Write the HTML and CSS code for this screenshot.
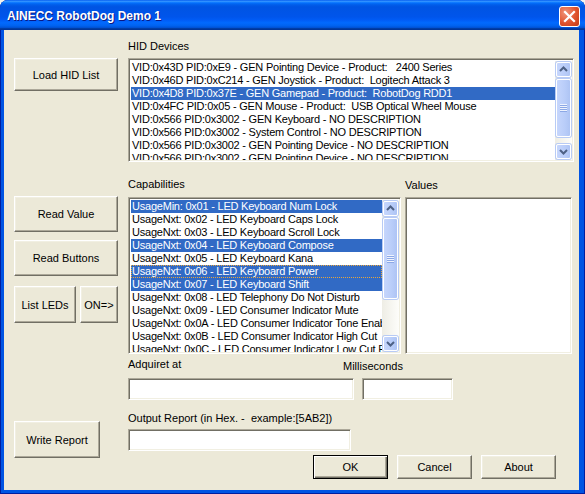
FILE: index.html
```html
<!DOCTYPE html>
<html lang="en">
<head>
    <meta charset="UTF-8">
    <title>AINECC RobotDog Demo 1</title>
    <link rel="stylesheet" href="styles.css">
</head>
<body>

<div class="window">
    <div class="titlebar">
        <span class="title">AINECC RobotDog Demo 1</span>
        <span class="close">
            <svg width="13" height="13" viewBox="0 0 13 13"><path d="M2 2 L11 11 M11 2 L2 11" stroke="#fff" stroke-width="2.2" stroke-linecap="square"/></svg>
        </span>
    </div>

    <div class="client">

        <!-- HID devices -->
        <div class="row hid-row">
            <div class="side">
                <button class="btn load-btn">Load HID List</button>
            </div>
            <div class="main">
                <div class="label">HID Devices</div>
                <div class="listbox hid-list">
                    <div class="items">
                        <div class="item">VID:0x43D PID:0xE9 - GEN Pointing Device - Product:   2400 Series</div>
                        <div class="item">VID:0x46D PID:0xC214 - GEN Joystick - Product:  Logitech Attack 3</div>
                        <div class="item selected">VID:0x4D8 PID:0x37E - GEN Gamepad - Product:  RobotDog RDD1</div>
                        <div class="item">VID:0x4FC PID:0x05 - GEN Mouse - Product:  USB Optical Wheel Mouse</div>
                        <div class="item">VID:0x566 PID:0x3002 - GEN Keyboard - NO DESCRIPTION</div>
                        <div class="item">VID:0x566 PID:0x3002 - System Control - NO DESCRIPTION</div>
                        <div class="item">VID:0x566 PID:0x3002 - GEN Pointing Device - NO DESCRIPTION</div>
                        <div class="item">VID:0x566 PID:0x3002 - GEN Pointing Device - NO DESCRIPTION</div>
                    </div>
                    <div class="sb">
                        <div class="sb-btn"><svg width="15" height="15" viewBox="0 0 15 15"><path d="M4 9 L7.5 5.5 L11 9" fill="none" stroke="#4d6185" stroke-width="2"/></svg></div>
                        <div class="sb-thumb hid-thumb"><span class="grip"></span></div>
                        <div class="sb-space"></div>
                        <div class="sb-btn"><svg width="15" height="15" viewBox="0 0 15 15"><path d="M4 6 L7.5 9.5 L11 6" fill="none" stroke="#4d6185" stroke-width="2"/></svg></div>
                    </div>
                </div>
            </div>
        </div>

        <!-- Capabilities / values -->
        <div class="row caps-row">
            <div class="side">
                <button class="btn tall-btn">Read Value</button>
                <button class="btn tall-btn read-buttons">Read Buttons</button>
                <div class="pair">
                    <button class="btn leds-btn">List LEDs</button>
                    <button class="btn on-btn">ON=&gt;</button>
                </div>
            </div>
            <div class="main caps-main">
                <div class="caps-col">
                    <div class="label">Capabilities</div>
                    <div class="listbox caps-list">
                        <div class="items">
                            <div class="item selected">UsageMin: 0x01 - LED Keyboard Num Lock</div>
                            <div class="item">UsageNxt: 0x02 - LED Keyboard Caps Lock</div>
                            <div class="item">UsageNxt: 0x03 - LED Keyboard Scroll Lock</div>
                            <div class="item selected">UsageNxt: 0x04 - LED Keyboard Compose</div>
                            <div class="item">UsageNxt: 0x05 - LED Keyboard Kana</div>
                            <div class="item selected focused">UsageNxt: 0x06 - LED Keyboard Power</div>
                            <div class="item selected">UsageNxt: 0x07 - LED Keyboard Shift</div>
                            <div class="item">UsageNxt: 0x08 - LED Telephony Do Not Disturb</div>
                            <div class="item">UsageNxt: 0x09 - LED Consumer Indicator Mute</div>
                            <div class="item">UsageNxt: 0x0A - LED Consumer Indicator Tone Enable</div>
                            <div class="item">UsageNxt: 0x0B - LED Consumer Indicator High Cut</div>
                            <div class="item">UsageNxt: 0x0C - LED Consumer Indicator Low Cut Filter</div>
                        </div>
                        <div class="sb">
                            <div class="sb-btn"><svg width="15" height="15" viewBox="0 0 15 15"><path d="M4 9 L7.5 5.5 L11 9" fill="none" stroke="#4d6185" stroke-width="2"/></svg></div>
                            <div class="sb-thumb caps-thumb"><span class="grip"></span></div>
                            <div class="sb-space"></div>
                            <div class="sb-btn"><svg width="15" height="15" viewBox="0 0 15 15"><path d="M4 6 L7.5 9.5 L11 6" fill="none" stroke="#4d6185" stroke-width="2"/></svg></div>
                        </div>
                    </div>
                </div>
                <div class="values-col">
                    <div class="label values-label">Values</div>
                    <div class="field values-box"></div>
                </div>
            </div>
        </div>

        <!-- Acquired at / milliseconds -->
        <div class="row adq-row">
            <div class="side"></div>
            <div class="main adq-main">
                <div class="adq-col">
                    <div class="label">Adquiret at</div>
                    <div class="field adq-box"></div>
                </div>
                <div class="ms-col">
                    <div class="label ms-label">Milliseconds</div>
                    <div class="field ms-box"></div>
                </div>
            </div>
        </div>

        <!-- Output report -->
        <div class="row out-row">
            <div class="side">
                <button class="btn write-btn">Write Report</button>
            </div>
            <div class="main">
                <div class="label">Output Report (in Hex. -  example:[5AB2])</div>
                <div class="field out-box"></div>
                <div class="dialog-buttons">
                    <button class="btn dlg-btn default">OK</button>
                    <button class="btn dlg-btn">Cancel</button>
                    <button class="btn dlg-btn">About</button>
                </div>
            </div>
        </div>

    </div>
</div>

</body>
</html>
```

FILE: styles.css
```css
body {
    margin: 0;
    background-color: #f4f3ee;
    font-family: "Liberation Sans", Arial, sans-serif;
    font-size: 11px;
    color: #000;
}

.window {
    width: 585px;
    height: 494px;
    background-color: #0054e3;
    border-radius: 8px 8px 0 0;
    display: flex;
    flex-direction: column;
    overflow: hidden;
    box-shadow: inset 1px 0 #001ea0, inset -1px 0 #001ea0, inset 0 -1px #001ea0;
}

.titlebar {
    height: 30px;
    flex: none;
    display: flex;
    align-items: center;
    justify-content: space-between;
    padding: 0 5px 0 7px;
    background: linear-gradient(to bottom, #0058ee 0%, #3593ff 4%, #288eff 6%, #127dff 8%, #036ffc 10%, #0262ee 14%, #0057e5 20%, #0054e3 24%, #0055eb 56%, #005bf5 66%, #026afe 76%, #0062ef 86%, #0052d6 92%, #0040ab 94%, #003092 100%);
}

.title {
    color: #fff;
    font-weight: bold;
    font-size: 12px;
    text-shadow: 1px 1px #0a1883;
    margin-top: 1px;
}

.close {
    width: 19px;
    height: 19px;
    border: 1px solid #fff;
    border-radius: 3px;
    background: radial-gradient(circle at 30% 30%, #f0947a, #e0532d 55%, #c23a14);
    display: flex;
    align-items: center;
    justify-content: center;
    margin-top: 2px;
}

.client {
    flex: 1;
    margin: 0 6px 4px 4px;
    background-color: #ece9d8;
    padding: 10px 0 0 10px;
}

.row {
    display: flex;
    gap: 10px;
    align-items: flex-start;
}

.side {
    width: 104px;
    flex: none;
}

.main {
    width: 446px;
    flex: none;
}

.label {
    height: 13px;
    line-height: 13px;
    white-space: pre;
}

/* classic 3D buttons */
.btn {
    font: inherit;
    color: #000;
    background-color: #ece9d8;
    border: 1px solid;
    border-color: #fff #716f64 #716f64 #fff;
    box-shadow: inset -1px -1px #aca899, inset 1px 1px #f1efe2;
    padding: 0;
    display: block;
}

.btn.default {
    border-color: #000;
    box-shadow: inset 1px 1px #fff, inset -1px -1px #716f64, inset -2px -2px #aca899;
}

.hid-row .side {
    padding-top: 18px;
}

.load-btn {
    width: 104px;
    height: 33px;
}

/* sunken boxes */
.listbox, .field {
    background-color: #fff;
    border: 1px solid;
    border-color: #aca899 #fff #fff #aca899;
    box-shadow: inset 1px 1px #716f64, inset -1px -1px #f1efe2;
    box-sizing: border-box;
}

.listbox {
    display: flex;
    padding: 2px 1px 1px 2px;
    overflow: hidden;
}

.items {
    flex: 1;
    overflow: hidden;
}

.item {
    height: 13px;
    line-height: 13px;
    padding-left: 1px;
    white-space: pre;
    overflow: hidden;
    letter-spacing: -0.22px;
}

.item.selected {
    background-color: #316ac5;
    color: #fff;
}

.item.focused {
    outline: 1px dotted #e8a53c;
    outline-offset: -1px;
}

.hid-list {
    margin-top: 5px;
    height: 104px;
}

/* xp scrollbar */
.sb {
    width: 17px;
    flex: none;
    display: flex;
    flex-direction: column;
    background: linear-gradient(90deg, #eeede5, #fdfdfa);
}

.sb-btn, .sb-thumb {
    margin: 1px;
    border: 1px solid #fff;
    border-radius: 2px;
    background: linear-gradient(90deg, #c6d6fc, #b9cdf9 60%, #aec4f4);
    box-shadow: 0 0 0 1px #b8cbf5;
}

.sb-btn {
    height: 13px;
    display: flex;
    align-items: center;
    justify-content: center;
    overflow: hidden;
}

.sb-btn svg {
    flex: none;
}

.sb-thumb {
    display: flex;
    align-items: center;
    justify-content: center;
}

.hid-thumb {
    height: 56px;
}

.caps-thumb {
    height: 79px;
}

.grip {
    width: 7px;
    height: 8px;
    background: repeating-linear-gradient(to bottom, #eef3fe 0 1px, #8ca8e6 1px 2px);
}

.sb-space {
    flex: 1;
}

/* capabilities */
.caps-row {
    margin-top: 16px;
}

.caps-row .side {
    padding-top: 18px;
}

.tall-btn {
    width: 104px;
    height: 36px;
}

.read-buttons {
    margin-top: 8px;
}

.pair {
    display: flex;
    gap: 4px;
    margin-top: 10px;
}

.leds-btn {
    width: 62px;
    height: 37px;
}

.on-btn {
    width: 38px;
    height: 37px;
}

.caps-main {
    display: flex;
    gap: 4px;
}

.caps-col {
    width: 273px;
}

.values-col {
    width: 167px;
}

.values-label {
    padding-top: 1px;
    height: 12px;
}

.caps-list, .values-box {
    margin-top: 6px;
    height: 157px;
}

/* acquired at */
.adq-row {
    margin-top: 4px;
}

.adq-main {
    display: flex;
    gap: 8px;
}

.adq-col {
    width: 226px;
}

.ms-col {
    width: 91px;
}

.ms-label {
    margin: 2px 0 0 -19px;
}

.adq-box, .ms-box {
    height: 22px;
}

.adq-box {
    margin-top: 7px;
}

.ms-box {
    margin-top: 5px;
}

/* output report */
.out-row {
    margin-top: 12px;
}

.out-row .side {
    padding-top: 9px;
}

.write-btn {
    width: 86px;
    height: 37px;
}

.out-box {
    margin-top: 4px;
    width: 223px;
    height: 22px;
}

.dialog-buttons {
    display: flex;
    justify-content: flex-end;
    gap: 9px;
    margin-top: 4px;
    padding-right: 18px;
}

.dlg-btn {
    width: 75px;
    height: 24px;
}
```
